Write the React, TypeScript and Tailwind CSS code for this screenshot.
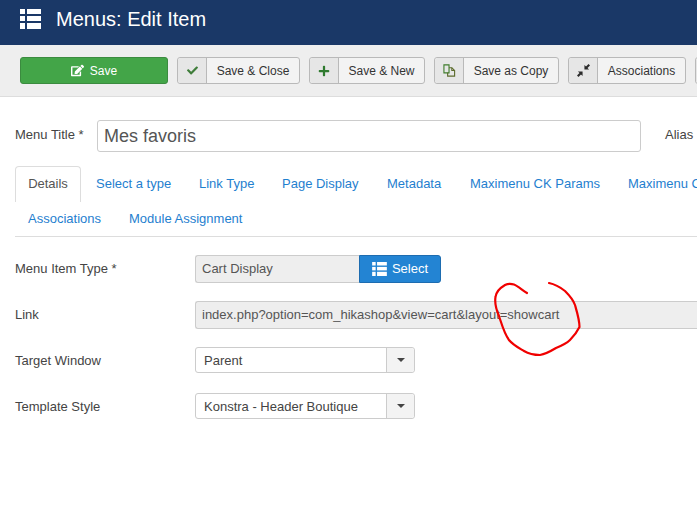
import { FaCheck, FaEdit, FaPlus } from 'react-icons/fa';

function ListIcon({ className }: { className: string }) {
  return (
    <svg viewBox="0 0 21 20" className={className} fill="currentColor">
      <rect x="0" y="0" width="5" height="5" />
      <rect x="7" y="0" width="14" height="5" />
      <rect x="0" y="7" width="5" height="5" />
      <rect x="7" y="7" width="14" height="5" />
      <rect x="0" y="14" width="5" height="6" />
      <rect x="7" y="14" width="14" height="6" />
    </svg>
  );
}

function CopyIcon() {
  return (
    <svg viewBox="0 0 14 14" className="w-[13px] h-[13px]" fill="none" strokeWidth="1.2">
      <path d="M1 1h5.5v8.5H1z" stroke="#3f7d2c" />
      <path d="M6.5 4h3l3 3v6H5V9.5" stroke="#5c6b2c" />
      <path d="M9.5 4v3h3" stroke="#5c6b2c" />
    </svg>
  );
}

function CompressIcon() {
  return (
    <svg viewBox="0 0 14 14" className="w-[13px] h-[13px]" fill="#2b2b2b">
      <path d="M8 1v5h5l-1.700-1.700L14 1.600 12.400 0 9.700 2.700z" />
      <path d="M1 8h5v5l-1.700-1.700L1.600 14 0 12.400l2.700-2.700z" />
    </svg>
  );
}

function ToolButton({ icon, label, width }: { icon: React.ReactNode; label: string; width: string }) {
  return (
    <div className={`flex h-[27px] shrink-0 rounded-[3px] border border-[#b9b9b9] bg-[#f3f3f3] text-[12px] text-[#333] ${width}`}>
      <div className="flex w-[29px] shrink-0 items-center justify-center rounded-l-[3px] border-r border-[#b9b9b9] bg-[#e6e6e6]">
        {icon}
      </div>
      <div className="flex flex-1 items-center justify-center">{label}</div>
    </div>
  );
}

function SelectBox({ value }: { value: string }) {
  return (
    <div className="flex h-[26px] w-[220px] rounded-[3px] border border-[#ccc] bg-white text-[13px] text-[#444]">
      <div className="flex flex-1 items-center pl-[8px] pt-[2px]">{value}</div>
      <div className="flex w-[28px] items-center justify-center rounded-r-[3px] border-l border-[#ccc] bg-[#f3f3f3]">
        <div className="h-0 w-0 border-x-[4px] border-t-[4px] border-x-transparent border-t-[#444]" />
      </div>
    </div>
  );
}

function Row({ label, labelClass, children }: { label: string; labelClass?: string; children: React.ReactNode }) {
  return (
    <div className="flex items-center">
      <div className={`w-[180px] shrink-0 text-[13px] text-[#444] ${labelClass ?? ''}`}>{label}</div>
      {children}
    </div>
  );
}

const topTabs = [
  ['Select a type', 'w-[103px]'],
  ['Link Type', 'w-[83px]'],
  ['Page Display', 'w-[105px]'],
  ['Metadata', 'w-[83px]'],
  ['Maximenu CK Params', 'w-[158px]'],
  ['Maximenu CK', 'w-[120px]'],
];

export default function App() {
  return (
    <div className="relative h-[522px] w-[697px] overflow-hidden bg-white font-['Liberation_Sans',Arial,sans-serif]">
      <header className="flex h-[45px] items-center bg-[#1a3867] pb-[7px] text-white">
        <ListIcon className="ml-[20px] h-[20px] w-[21px]" />
        <h1 className="ml-[15px] text-[20px] leading-none">Menus: Edit Item</h1>
      </header>

      <div className="flex h-[52px] items-start gap-[9px] overflow-hidden border-b border-[#ddd] bg-[#eee] pl-[20px] pt-[12px]">
        <div className="flex h-[27px] w-[148px] shrink-0 items-center justify-center gap-[6px] rounded-[3px] border border-[#3b8b3f] bg-[#43a548] text-[12px] text-white">
          <FaEdit className="h-[13px] w-[13px]" />
          <span>Save</span>
        </div>
        <ToolButton icon={<FaCheck className="h-[11px] w-[11px] text-[#3f7d3a]" />} label="Save & Close" width="w-[123px]" />
        <ToolButton icon={<FaPlus className="h-[12px] w-[12px] text-[#2f7a2f]" />} label="Save & New" width="w-[116px]" />
        <ToolButton icon={<CopyIcon />} label="Save as Copy" width="w-[125px]" />
        <ToolButton icon={<CompressIcon />} label="Associations" width="w-[118px]" />
        <ToolButton icon={null} label="" width="w-[60px]" />
      </div>

      <main className="pl-[15px]">
        <div className="flex items-center pt-[23px]">
          <label className="w-[82px] shrink-0 pb-[3px] text-[13px] leading-none text-[#444]">Menu Title *</label>
          <div className="flex h-[32px] w-[544px] shrink-0 items-center rounded-[3px] border border-[#ccc] bg-white pl-[6px] text-[18px] text-[#555]">
            Mes favoris
          </div>
          <span className="ml-[24px] whitespace-nowrap pb-[3px] text-[13px] leading-none text-[#444]">Alias</span>
        </div>

        <nav className="mt-[14px] border-b border-[#ddd] text-[13px] text-[#1f80cf]">
          <div className="flex h-[36px] whitespace-nowrap">
            <div className="mr-[1px] flex h-[36px] w-[66px] shrink-0 items-center justify-center rounded-t-[4px] border-x border-t border-[#ddd] pb-[1px] text-[#555]">
              Details
            </div>
            {topTabs.map(([name, width]) => (
              <div key={name} className={`flex shrink-0 items-center pb-[1px] pl-[14px] ${width}`}>
                {name}
              </div>
            ))}
          </div>
          <div className="flex h-[34px] items-center whitespace-nowrap pb-[1px] pl-[13px]">
            <span className="w-[101px]">Associations</span>
            <span>Module Assignment</span>
          </div>
        </nav>

        <div className="mt-[18px] flex flex-col">
          <Row label="Menu Item Type *">
            <div className="flex h-[28px]">
              <div className="flex w-[164px] items-center rounded-l-[3px] border border-r-0 border-[#ccc] bg-[#eee] pl-[6px] text-[13px] text-[#555]">
                Cart Display
              </div>
              <div className="flex w-[82px] items-center justify-center gap-[5px] rounded-r-[3px] border border-[#1d6cb0] bg-[#2384d3] text-[13px] text-white">
                <ListIcon className="h-[14px] w-[15px]" />
                Select
              </div>
            </div>
          </Row>
          <div className="mt-[18px]">
            <Row label="Link">
              <div className="flex h-[28px] w-[520px] shrink-0 items-center rounded-l-[3px] border border-r-0 border-[#ccc] bg-[#eee] pl-[6px] text-[13px] text-[#555]">
                index.php?option=com_hikashop&amp;view=cart&amp;layout=showcart
              </div>
            </Row>
          </div>
          <div className="mt-[18px]">
            <Row label="Target Window" labelClass="pt-[2px]">
              <SelectBox value="Parent" />
            </Row>
          </div>
          <div className="mt-[20px]">
            <Row label="Template Style" labelClass="pt-[2px]">
              <SelectBox value="Konstra - Header Boutique" />
            </Row>
          </div>
        </div>
      </main>

      <svg viewBox="0 0 697 522" className="pointer-events-none absolute left-0 top-0 h-[522px] w-[697px]" fill="none">
        <path
          d="M527 293C522 290 518 286 514 284.500C511 283.500 508 283.500 505 285C500 288 496 292 495.500 297C494.500 303 496 309 499 316C502 325 504 333 509 340C513 345 519 348 524 351C529 354 535 355 540 355C546 354 551 351 556 348C561 346 566 344 570 340C574 336 577 332 579.500 327C579.500 320 577 312 575 305C573 299 569 295 565 291C560 287 554 284 549 283"
          stroke="#f00000"
          strokeWidth="2.200"
          strokeLinecap="round"
        />
      </svg>
    </div>
  );
}
